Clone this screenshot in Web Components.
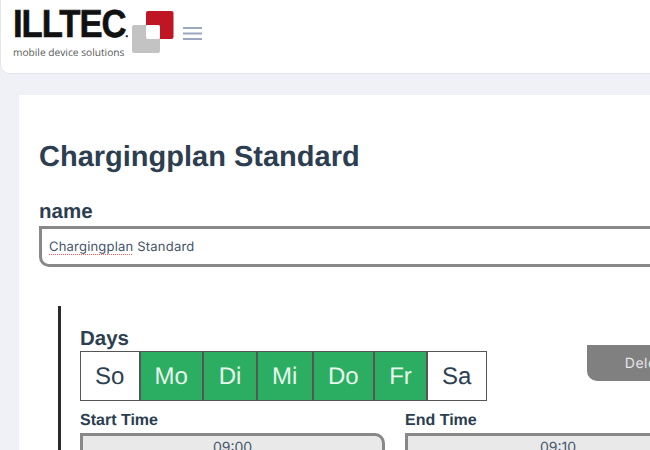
<!DOCTYPE html>
<html>
<head>
<meta charset="utf-8">
<style>
  html, body { margin: 0; height: 100%; overflow: hidden; background: #eff1f6; }
  body { font-family: "Liberation Sans", Arial, sans-serif; color: #2c3e50; text-rendering: geometricPrecision; }
</style>
</head>
<body>
<app-header></app-header>
<plan-card>
  <plan-name-field label="name" value="Chargingplan Standard" slot="name"></plan-name-field>
  <schedule-block>
    <day-picker></day-picker>
    <time-field slot="start" label="Start Time" value="09:00" corner="start"></time-field>
    <time-field slot="end" label="End Time" value="09:10"></time-field>
  </schedule-block>
</plan-card>

<script>
class AppHeader extends HTMLElement {
  constructor() {
    super();
    this.attachShadow({ mode: 'open' }).innerHTML = `
      <style>
        :host {
          display: flex;
          align-items: center;
          box-sizing: border-box;
          height: 74px;
          padding: 0 0 0 12px;
          background: #fff;
          border-bottom: 1px solid #e3e6ee;
          border-left: 1px solid #e3e6ee;
          border-bottom-left-radius: 9px;
        }
        .logo { display: flex; align-items: flex-start; height: 74px; }
        .words { display: flex; flex-direction: column; margin-top: 6px; width: 119px; }
        .brand {
          font: bold 39px/37px "Liberation Sans", sans-serif;
          color: #111;
          letter-spacing: -1.2px;
          white-space: nowrap;
          transform: scaleX(0.89);
          transform-origin: left top;
          -webkit-text-stroke: 0.6px #111;
        }
        .brand i { font-style: normal; font-size: 10px; letter-spacing: 0; }
        .sub {
          font: 10.2px/12px "Open Sans", sans-serif;
          color: #5a5a5a;
          margin-top: -7px;
          white-space: nowrap;
        }
        svg.mark { margin-top: 10px; }
        .burger { margin-left: 9px; margin-bottom: 7px; }
      </style>
      <div class="logo">
        <div class="words">
          <div class="brand">ILLTEC<i>.</i></div>
          <div class="sub">mobile device solutions</div>
        </div>
        <svg class="mark" width="42" height="44" viewBox="0 0 42 44">
          <rect x="14" y="1" width="27.5" height="28" rx="2" fill="#c01523"/>
          <rect x="0" y="15" width="28" height="28" rx="2" fill="#c3c3c3"/>
          <rect x="14" y="15" width="14" height="14" rx="2" fill="#fff"/>
        </svg>
      </div>
      <svg class="burger" width="20" height="15" viewBox="0 0 20 15">
        <path d="M0 2h19M0 7.5h19M0 13h19" stroke="#9aa8c0" stroke-width="2" fill="none"/>
      </svg>`;
  }
}

class PlanCard extends HTMLElement {
  constructor() {
    super();
    this.attachShadow({ mode: 'open' }).innerHTML = `
      <style>
        :host {
          display: block;
          box-sizing: border-box;
          margin: 21px 0 0 19px;
          width: 760px;
          height: 500px;
          padding: 42px 0 0 20px;
          background: #fff;
        }
        h1 {
          margin: 0;
          font: bold 29px/40px "Liberation Sans", sans-serif;
          color: #2c3e50;
          white-space: nowrap;
        }
      </style>
      <h1>Chargingplan Standard</h1>
      <slot name="name"></slot>
      <slot></slot>`;
  }
}

class PlanNameField extends HTMLElement {
  constructor() {
    super();
    this.attachShadow({ mode: 'open' }).innerHTML = `
      <style>
        :host { display: block; margin-top: 21px; }
        label {
          display: block;
          padding-top: 1px;
          font: bold 20.5px/25px "Liberation Sans", sans-serif;
          color: #2c3e50;
        }
        .box {
          box-sizing: border-box;
          height: 41px;
          margin-top: 2px;
          padding: 1px 7px 0;
          display: flex;
          align-items: center;
          border: 3px solid #888;
          border-bottom-left-radius: 10px;
          font: 13px "Inter", sans-serif;
          letter-spacing: 0.2px;
          color: #44546a;
        }
        /* browser spellcheck dots under the unknown word */
        .typo {
          background: repeating-linear-gradient(90deg, #ff5a5a 0 1px, transparent 1px 2px) left bottom / 100% 1px no-repeat;
        }
      </style>
      <label></label>
      <div class="box"><span><span class="typo"></span> <span class="rest"></span></span></div>`;
  }
  connectedCallback() {
    const root = this.shadowRoot;
    root.querySelector('label').textContent = this.getAttribute('label');
    const [first, ...others] = this.getAttribute('value').split(' ');
    root.querySelector('.typo').textContent = first;
    root.querySelector('.rest').textContent = others.join(' ');
  }
}

class SchedulingBlock extends HTMLElement {
  constructor() {
    super();
    this.attachShadow({ mode: 'open' }).innerHTML = `
      <style>
        :host {
          display: block;
          box-sizing: border-box;
          width: 653px;
          height: 200px;
          margin: 39px 0 0 19px;
          padding: 20px 0 0 19px;
          border-left: 3px solid #2b2b2b;
        }
        .top { display: flex; justify-content: space-between; align-items: flex-start; }
        .times { display: grid; grid-template-columns: 305px 306px; column-gap: 20px; margin-top: 10px; }
      </style>
      <div class="top">
        <slot></slot>
        <delete-button>Delete</delete-button>
      </div>
      <div class="times">
        <slot name="start"></slot>
        <slot name="end"></slot>
      </div>`;
  }
}

const DAYS = [
  ['So', false, 59.5], ['Mo', true, 63.5], ['Di', true, 54], ['Mi', true, 55.5],
  ['Do', true, 61.5], ['Fr', true, 53], ['Sa', false, 59.5]
];

class DayPicker extends HTMLElement {
  constructor() {
    super();
    const cells = DAYS.map(([name, on, w]) =>
      `<div class="day${on ? ' on' : ''}" style="width:${w}px">${name}</div>`).join('');
    this.attachShadow({ mode: 'open' }).innerHTML = `
      <style>
        :host { display: block; }
        h2 { margin: 0; padding-top: 1px; font: bold 20.5px/24px "Liberation Sans", sans-serif; color: #2c3e50; }
        .row { display: flex; }
        .day {
          box-sizing: border-box;
          height: 50px;
          padding-top: 1px;
          display: flex;
          align-items: center;
          justify-content: center;
          border: 1px solid #555;
          font: 24px "Liberation Sans", sans-serif;
          color: #2c3e50;
          background: #fff;
        }
        .day.on { background: #2bae62; color: #e8f6ee; }
      </style>
      <h2>Days</h2>
      <div class="row">${cells}</div>`;
  }
}

class DeleteButton extends HTMLElement {
  constructor() {
    super();
    this.attachShadow({ mode: 'open' }).innerHTML = `
      <style>
        :host {
          display: flex;
          align-items: center;
          justify-content: center;
          box-sizing: border-box;
          width: 124px;
          height: 36px;
          margin-top: 19px;
          padding: 1px 3px 0 0;
          background: #808080;
          border-bottom-left-radius: 10px;
          font: 14px "Inter", sans-serif;
          letter-spacing: 0.5px;
          color: #e6e6e6;
        }
      </style>
      <slot></slot>`;
  }
}

class TimeField extends HTMLElement {
  constructor() {
    super();
    this.attachShadow({ mode: 'open' }).innerHTML = `
      <style>
        :host { display: block; }
        label { display: block; font: bold 16px/20px "Liberation Sans", sans-serif; color: #2c3e50; }
        .box {
          box-sizing: border-box;
          height: 40px;
          margin-top: 2px;
          padding-top: 2px;
          text-align: center;
          background: #e9e9e9;
          border: 3px solid #888;
          font: 14px/20px "Inter", sans-serif;
          color: #44546a;
        }
        :host([corner="start"]) .box { border-top-right-radius: 10px; }
      </style>
      <label></label>
      <div class="box"></div>`;
  }
  connectedCallback() {
    this.shadowRoot.querySelector('label').textContent = this.getAttribute('label');
    this.shadowRoot.querySelector('.box').textContent = this.getAttribute('value');
  }
}

customElements.define('app-header', AppHeader);
customElements.define('plan-card', PlanCard);
customElements.define('plan-name-field', PlanNameField);
customElements.define('schedule-block', SchedulingBlock);
customElements.define('day-picker', DayPicker);
customElements.define('delete-button', DeleteButton);
customElements.define('time-field', TimeField);
</script>
</body>
</html>
